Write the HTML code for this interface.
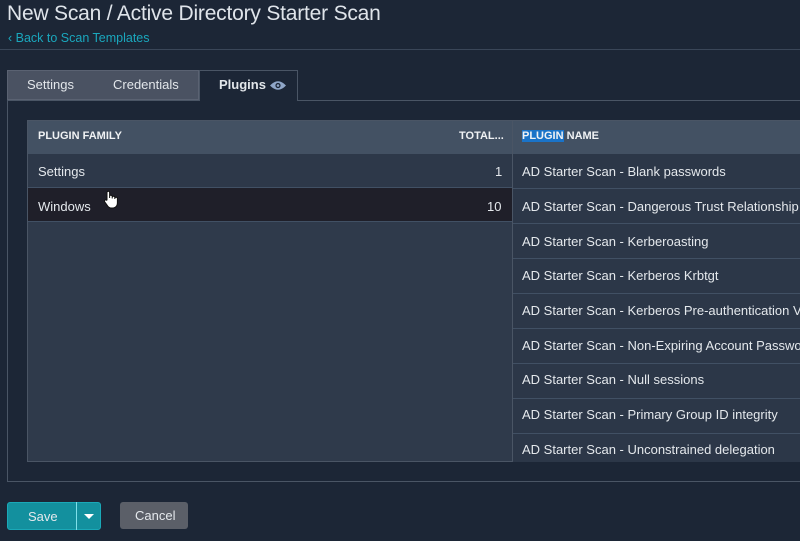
<!DOCTYPE html>
<html><head><style>
*{margin:0;padding:0;box-sizing:border-box}
html,body{width:800px;height:541px;overflow:hidden}
body{background:#1c2636;font-family:"Liberation Sans",sans-serif;color:#e4e8ec;position:relative}
#w{position:absolute;left:0;top:0;width:800px;height:541px;overflow:hidden}
.abs{position:absolute}
.title{left:7px;top:2px;font-size:21px;color:#dfe4ea;white-space:nowrap;letter-spacing:-0.2px}
.back{left:8px;top:31px;font-size:12.5px;color:#1aa7bd}
.hr{left:0;top:49px;width:800px;height:1px;background:#3a4658}
.tabs{left:7px;top:70px;width:192px;height:30px;background:#4a5262;border:1px solid #5a6272}
.tab{top:77px;font-size:13px;color:#e2e6ea}
.ptab{left:199px;top:70px;width:99px;height:31px;background:#1c2636;border:1px solid #4a5565;border-bottom:none}
.panel{left:7px;top:100px;width:793px;height:382px;border:1px solid #4a5565;border-right:none}
.table{left:27px;top:120px;width:773px;height:342px;background:#2f3a4b;border:1px solid #4a5565;border-right:none}
.hdr{left:28px;top:121px;width:772px;height:33px;background:#435163}
.h{font-size:11px;font-weight:bold;color:#f0f2f4;top:130px}
.row{font-size:13px;color:#e4e8ec;white-space:nowrap}
.lrow{left:28px;width:484px;height:34px;border-bottom:1px solid #415064}
.rrow{left:513px;width:287px;height:35px;border-bottom:1px solid #415064;background:#2c3748}
.div{left:512px;top:121px;width:1px;height:341px;background:#4a5565}
.clip{left:513px;top:154px;width:287px;height:308px;overflow:hidden}
</style></head><body><div id="w">
<div class="abs title">New Scan / Active Directory Starter Scan</div>
<div class="abs back">‹ Back to Scan Templates</div>
<div class="abs hr"></div>
<div class="abs panel"></div>
<div class="abs tabs"></div>
<div class="abs ptab"></div>
<div class="abs tab" style="left:27px">Settings</div>
<div class="abs tab" style="left:113px">Credentials</div>
<div class="abs tab" style="left:219px;font-weight:bold">Plugins</div>
<svg class="abs" style="left:269px;top:80px" width="18" height="11" viewBox="0 0 18 11"><path d="M1 5.5Q9 -3 17 5.5Q9 14 1 5.5Z" fill="#8fa6c8"/><circle cx="9" cy="5.5" r="2.6" fill="#1c2636"/><circle cx="9" cy="5.5" r="1.3" fill="#8fa6c8"/></svg>
<div class="abs table"></div>
<div class="abs hdr"></div>
<div class="abs h" style="left:38px">PLUGIN FAMILY</div>
<div class="abs h" style="left:459px">TOTAL...</div>
<div class="abs h" style="left:522px"><span style="background:#1a73c8">PLUGIN</span> NAME</div>
<div class="abs lrow" style="top:154px;background:#2d3849"></div>
<div class="abs lrow" style="top:188px;background:#1f1f29"></div>
<div class="abs row" style="left:38px;top:164px">Settings</div>
<div class="abs row" style="left:495px;top:164px">1</div>
<div class="abs row" style="left:38px;top:199px">Windows</div>
<div class="abs row" style="left:487px;top:199px">10</div>
<div class="abs clip">
<div class="abs rrow" style="left:0;top:0"></div>
<div class="abs rrow" style="left:0;top:35px"></div>
<div class="abs rrow" style="left:0;top:70px"></div>
<div class="abs rrow" style="left:0;top:105px"></div>
<div class="abs rrow" style="left:0;top:140px"></div>
<div class="abs rrow" style="left:0;top:175px"></div>
<div class="abs rrow" style="left:0;top:210px"></div>
<div class="abs rrow" style="left:0;top:245px"></div>
<div class="abs rrow" style="left:0;top:280px;height:28px;border:none"></div>
<div class="abs row" style="left:9px;top:10px">AD Starter Scan - Blank passwords</div>
<div class="abs row" style="left:9px;top:45px">AD Starter Scan - Dangerous Trust Relationship</div>
<div class="abs row" style="left:9px;top:80px">AD Starter Scan - Kerberoasting</div>
<div class="abs row" style="left:9px;top:114px">AD Starter Scan - Kerberos Krbtgt</div>
<div class="abs row" style="left:9px;top:149px">AD Starter Scan - Kerberos Pre-authentication Validation</div>
<div class="abs row" style="left:9px;top:184px">AD Starter Scan - Non-Expiring Account Password</div>
<div class="abs row" style="left:9px;top:218px">AD Starter Scan - Null sessions</div>
<div class="abs row" style="left:9px;top:253px">AD Starter Scan - Primary Group ID integrity</div>
<div class="abs row" style="left:9px;top:288px">AD Starter Scan - Unconstrained delegation</div>
</div>
<div class="abs div"></div>
<svg class="abs" style="left:103px;top:190px" width="16" height="19" viewBox="0 0 16 19"><path d="M4 10V2.5a1.3 1.3 0 0 1 2.6 0V8V6.5a1.3 1.3 0 0 1 2.6 0V8.5V7.5a1.3 1.3 0 0 1 2.6 0V9V8.5a1.3 1.3 0 0 1 2.6 0V13q0 4-4 5H7.5q-2-0.5-3.5-3L1.5 11.5a1.2 1.2 0 0 1 2-1.2Z" fill="#fff" stroke="#111" stroke-width="1"/></svg>
<div class="abs" style="left:7px;top:502px;width:94px;height:28px;background:#13909e;border:1px solid #1aa9b8;border-radius:3px"></div>
<div class="abs" style="left:76px;top:502px;width:1px;height:28px;background:#7fe0ea"></div>
<div class="abs row" style="left:28px;top:509px;font-size:13px">Save</div>
<div class="abs" style="left:84px;top:514px;width:0;height:0;border-left:5px solid transparent;border-right:5px solid transparent;border-top:5px solid #fff"></div>
<div class="abs" style="left:120px;top:502px;width:68px;height:27px;background:#5b5f68;border-radius:3px"></div>
<div class="abs row" style="left:135px;top:508px">Cancel</div>
</div></body></html>
